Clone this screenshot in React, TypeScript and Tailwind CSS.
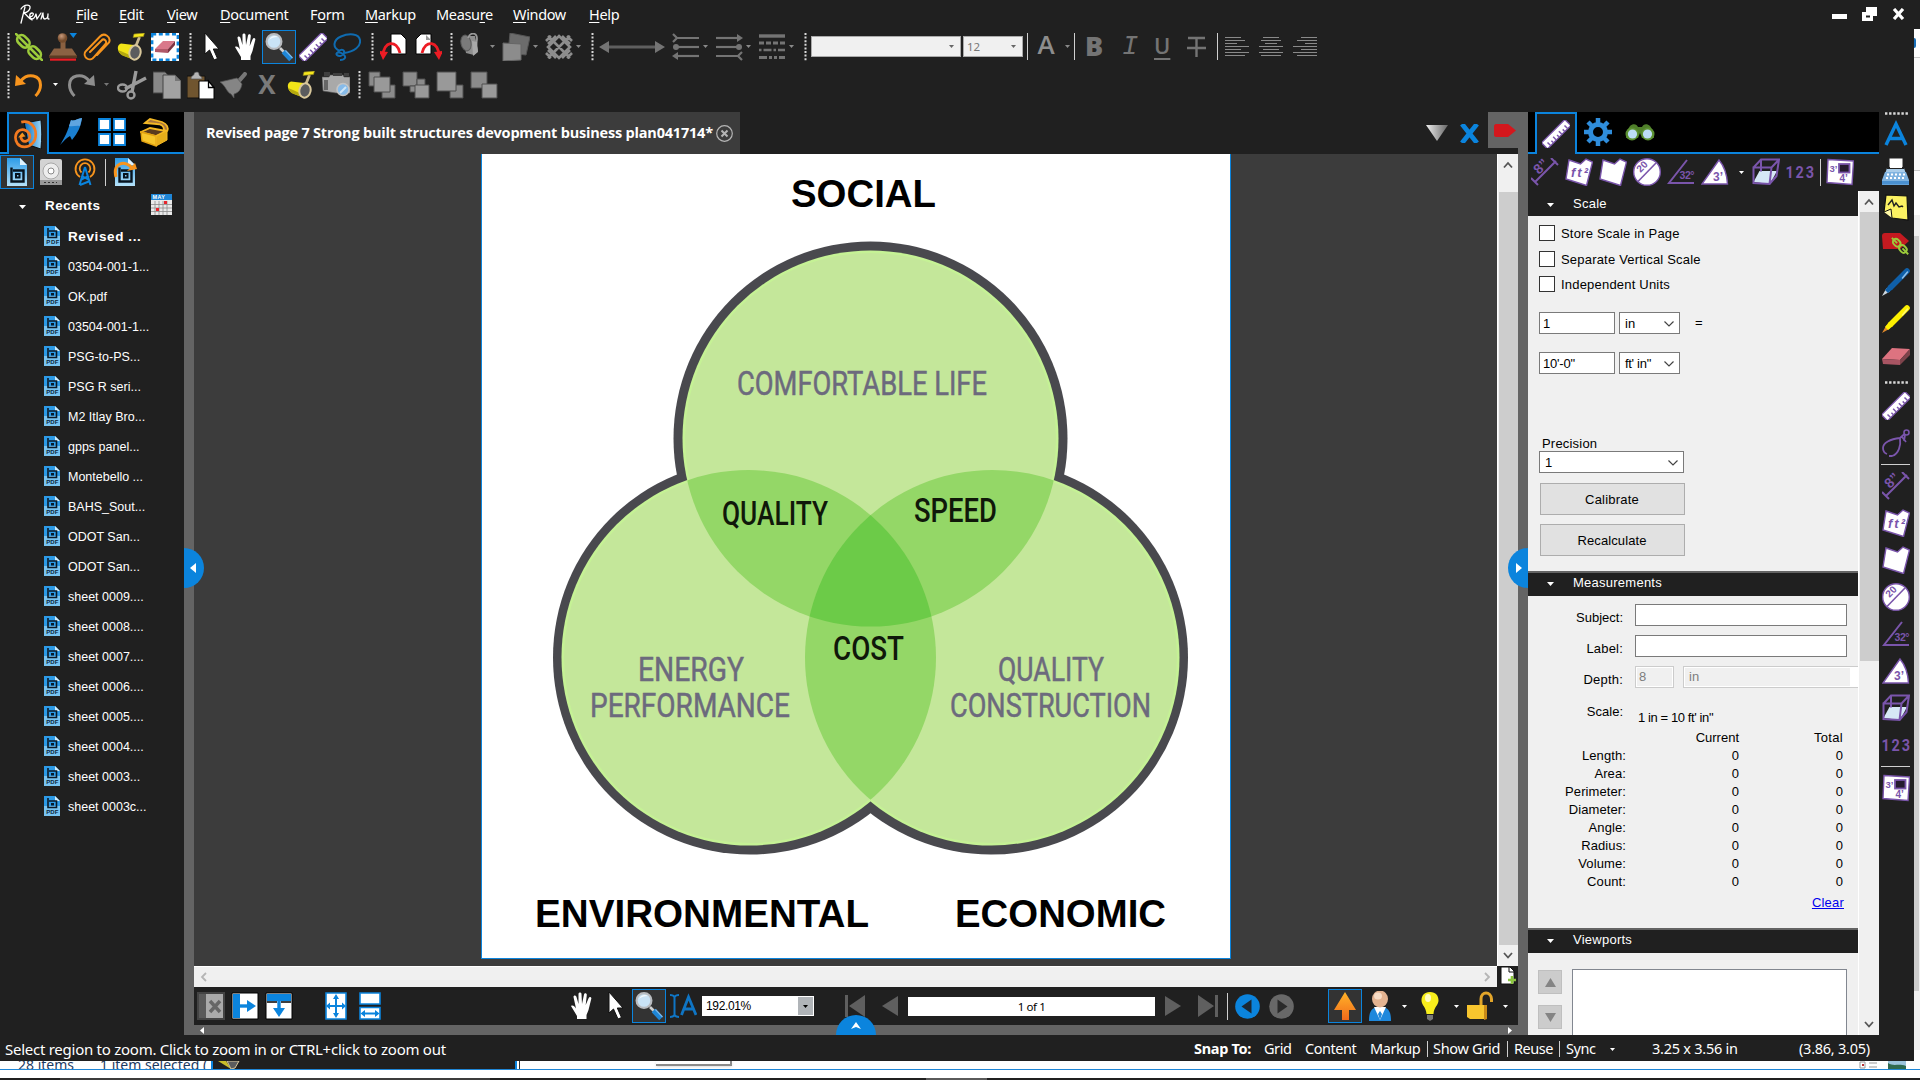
import React from "react";

type Kids = { children?: React.ReactNode };
type Cls = { c?: string };

const P = "#7a55ab";

function Slot({ c = "", children }: Cls & Kids) {
  return <div className={`flex shrink-0 items-center justify-center ${c}`}>{children}</div>;
}

function Ico({ s = 28, w, vb = "0 0 28 28", children }: Kids & { s?: number; w?: number; vb?: string }) {
  return (
    <svg width={w ?? s} height={s} viewBox={vb} fill="none" className="shrink-0">
      {children}
    </svg>
  );
}

const Grip = ({ c = "" }: Cls) => (
  <svg width="3" height="29" viewBox="0 0 3 29" className={`shrink-0 ${c}`}>
    <path d="M1.5 1v28" stroke="#d9d9d9" strokeWidth="2" strokeDasharray="2 1.6" />
  </svg>
);
const GripH = () => (
  <svg width="24" height="3" viewBox="0 0 24 3">
    <path d="M1 1.500h23" stroke="#d9d9d9" strokeWidth="2.400" strokeDasharray="2.400 1.700" />
  </svg>
);
const Caret = ({ c = "text-white" }: Cls) => (
  <svg width="5" height="3" viewBox="0 0 5 3" className={`shrink-0 ${c}`}>
    <path d="M0 0h5L2.500 3z" fill="currentColor" />
  </svg>
);
const Sep = ({ c = "" }: Cls) => <div className={`h-[27px] w-px shrink-0 bg-[#cfcfcf] ${c}`} />;

/* ---------- general icons ---------- */
const LinkIcon = () => (
  <Ico>
    <g transform="rotate(45 14 14)" stroke="#9ccb3b" strokeWidth="2.600">
      <rect x="-1" y="9.500" width="14" height="9" rx="4.500" />
      <rect x="15" y="9.500" width="14" height="9" rx="4.500" />
      <path d="M-4.500 14H8M20 14h12.500M9 14h10" strokeLinecap="round" />
    </g>
  </Ico>
);
const StampIcon = () => (
  <Ico>
    <defs>
      <radialGradient id="stampKnob" cx=".4" cy=".3"><stop stopColor="#c99a7c" /><stop offset="1" stopColor="#754c2c" /></radialGradient>
    </defs>
    <rect x="11.500" y="7" width="5" height="11" fill="#8a6040" />
    <circle cx="13.500" cy="5" r="4.800" fill="url(#stampKnob)" />
    <path d="M5 15.500h18L28 23H0z" fill="#8b6243" />
    <path d="M0 22.500h28v2.500H0z" fill="#5b3b22" />
    <path d="M1 26.600h26" stroke="#ed1c24" strokeWidth="2.200" />
    <path d="M20.500 0H28l-3.700 5z" fill="#0b84dd" />
  </Ico>
);
const ClipIcon = () => (
  <Ico>
    <path d="M7 19 18.500 7.500a2.500 2.500 0 0 1 4 3.500L11 24a5 5 0 0 1-8.500-5.500L17 3.500a5.500 5.500 0 0 1 9 6L14 22" stroke="#f7941d" strokeWidth="2" strokeLinecap="round" />
  </Ico>
);
const BucketIcon = () => (
  <Ico>
    <path d="m18.500 14 4-10" stroke="#cbb98f" strokeWidth="2.800" />
    <path d="m17 1 10.500-1-1 3.500-10.500 1z" fill="#f5e61c" stroke="#8a7e1c" strokeWidth=".6" />
    <path d="M4 10.500 17 12l1 15-12-4.500C0 20-1 12 4 10.500z" fill="#f2e418" />
    <path d="M1 17c1 3 3 5 5 5.800L17 27v-3L6 19z" fill="#b5a90e" />
    <ellipse cx="18" cy="19.500" rx="5.600" ry="7.200" transform="rotate(12 18 19.500)" fill="#5b5c5e" stroke="#d9c89c" strokeWidth="2" />
  </Ico>
);
const EraseSelIcon = () => (
  <Ico>
    <path d="M0 0h28v28H0z" fill="#fff" />
    <rect x="1.200" y="1.200" width="25.600" height="25.600" stroke="#0b84dd" strokeWidth="2.400" strokeDasharray="4 2.600" />
    <path d="m12 8 12 0-7 8-13 0z" fill="#d9788a" />
    <path d="M4 16h13v4L4 19z" fill="#b05868" />
    <path d="m24 8-7 8v4l7-8z" fill="#7d3140" />
  </Ico>
);
const Eraser = () => (
  <Ico w={28} s={20} vb="0 0 28 20">
    <path d="M10 2 28 3 18 14 0 13z" fill="#dd7380" />
    <path d="m0 13 18 1v5L1 18z" fill="#a85563" />
    <path d="M28 3 18 14v5L28 9z" fill="#7e434b" />
  </Ico>
);
const ArrowCursor = () => (
  <Ico>
    <path d="m8 0 0 21 4.500-4L17 27l3.500-1.500L16.300 16H22z" fill="#fff" stroke="#111" />
  </Ico>
);
const Hand = () => (
  <Ico>
    <path d="M4 14c2-1.500 4 1 5 2.500L6.500 5c0-2 2.300-2 3 0l2 7V2c0-2 3-2 3 0l.5 10L17 2.500c.5-2 3-1.500 2.800.5L18.700 13l3-7c.8-1.800 3-1 2.600.8L21.500 18l-2 5v4H10v-3z" fill="#fff" />
  </Ico>
);
const Magnifier = () => (
  <Ico s={30} vb="0 0 30 30">
    <path d="m16 16 4 4" stroke="#cfcfcf" strokeWidth="2.600" />
    <path d="m19.500 19.500 7.500 8" stroke="#1f86d6" strokeWidth="5" />
    <path d="m21.500 18.500 7 7.500" stroke="#7ab9ec" strokeWidth="1.200" />
    <circle cx="10" cy="9.500" r="7.400" fill="#c9e3f6" stroke="#b9bcc0" strokeWidth="2.200" />
    <path d="M5 8a6 6 0 0 1 9-3C10 5 7 6 5 8z" fill="#fff" opacity=".8" />
  </Ico>
);
const Ruler = () => (
  <Ico>
    <g transform="rotate(-45 14 14)">
      <rect x="-2.500" y="10" width="33" height="8.500" fill="#fff" stroke={P} strokeWidth="1.300" />
      <path d="M2 14v4M6 15.500V18M10 14v4M14 15.500V18M18 14v4M22 15.500V18M26 14v4" stroke={P} strokeWidth="1.500" />
    </g>
  </Ico>
);
const Lasso = () => (
  <Ico>
    <path d="M7 18C-1 15 0 7 8 3.500s18-3 19 3.500-6 12-16 13M5 19c3-4 7-2 6 1s-5 4-7 2 2-4 6-1 2 6-3 6" stroke="#0f6bb0" strokeWidth="2" />
  </Ico>
);
const Rotate = ({ flip }: { flip?: boolean }) => (
  <Ico>
    <g transform={flip ? "matrix(-1 0 0 1 28 0)" : undefined}>
      <path d="M11 1h10l5 5v15H11z" fill="#fff" stroke="#000" />
      <path d="M3 23C3 8 17 6 20 20" stroke="#ed1c24" strokeWidth="2.800" />
      <path d="m-1 18 9 1-5 8z" fill="#ed1c24" />
    </g>
    {flip && <path d="m12 2 5 5h-5z" fill="#999" />}
  </Ico>
);
const Cup = () => (
  <Ico>
    <path d="M4 3h12l3 15-4 4-8-2z" fill="#8f8f8f" />
    <ellipse cx="7" cy="10" rx="5" ry="8" transform="rotate(-12 7 10)" fill="#7a7a7a" stroke="#5a5a5a" />
    <path d="M9 5c2-6 9-6 9 1l-1 8" stroke="#9a9a9a" strokeWidth="1.800" />
    <path d="m13 8 5 1 1 10-5 4z" fill="#a8a8a8" />
  </Ico>
);
const TwoSq = () => (
  <Ico>
    <path d="m8 0 20 4-4 18-18-2z" fill="#6c6c6c" stroke="#555" />
    <path d="m1 10 18 1v16L1 28z" fill="#8c8c8c" stroke="#666" />
  </Ico>
);
const Hatch = () => (
  <Ico>
    <path d="m3 3 22 22M3 25 25 3M3 11l8-8M17 3l8 8M3 17l8 8M25 17l-8 8M1 8l5-5M22 3l5 5M1 20l5 5M27 20l-5 5" stroke="#8d8d8d" strokeWidth="2.600" />
    <path d="m14 3 11 11-11 11L3 14z" stroke="#8d8d8d" strokeWidth="2.600" />
  </Ico>
);
const DoubleArrow = () => (
  <Ico w={66} s={14} vb="0 0 66 14">
    <path d="M8 7h50" stroke="#5f5f5f" strokeWidth="3" />
    <path d="M0 7 10 1v12zM66 7 56 1v12z" fill="#747474" />
  </Ico>
);
const LineStarts = ({ flip }: { flip?: boolean }) => (
  <Ico>
    <g transform={flip ? "rotate(180 14 14)" : undefined} stroke="#747474" fill="#747474" strokeWidth="2.200">
      <path d="M5 5h22M1 1l4 4-4 4" fill="none" />
      <path d="M5 14h22" />
      <circle cx="4" cy="14" r="3" stroke="none" />
      <path d="M5 23h22" />
      <path d="m0 23 6-4v8z" stroke="none" />
    </g>
  </Ico>
);
const Dashes = () => (
  <Ico>
    <path d="M1 3h26" stroke="#747474" strokeWidth="3.400" />
    <path d="M1 10h26" stroke="#747474" strokeWidth="3" strokeDasharray="5 2" />
    <path d="M1 17h26" stroke="#747474" strokeWidth="2.600" strokeDasharray="2.500 2 8 2" />
    <path d="M1 24.500h26" stroke="#747474" strokeWidth="3" strokeDasharray="8 2 3 2 3 2" />
  </Ico>
);
const Align = ({ k }: { k: "l" | "c" | "r" }) => (
  <div className={`flex w-6 flex-col gap-[2px] ${k === "l" ? "items-start" : k === "c" ? "items-center" : "items-end"}`}>
    <div className="h-px w-4 bg-[#8a8a8a]" />
    <div className="h-px w-5 bg-[#8a8a8a]" />
    <div className="h-px w-3 bg-[#8a8a8a]" />
    <div className="h-px w-6 bg-[#8a8a8a]" />
    <div className="h-px w-4 bg-[#8a8a8a]" />
    <div className="h-px w-6 bg-[#8a8a8a]" />
    <div className="h-px w-5 bg-[#8a8a8a]" />
  </div>
);
const Undo = ({ flip, color }: { flip?: boolean; color: string }) => (
  <Ico>
    <g transform={flip ? "matrix(-1 0 0 1 28 0)" : undefined}>
      <path d="M6 9.500C13 1.500 25.500 4 25.500 14c0 5-2 8-5 11" stroke={color} strokeWidth="3" />
      <path d="M1 4 0 15l11-2z" fill={color} />
    </g>
  </Ico>
);
const Scissors = () => (
  <Ico s={30} vb="0 0 30 30">
    <path d="M19 1 15 22M29 8 8 19" stroke="#9a9a9a" strokeWidth="3.400" />
    <circle cx="14" cy="25" r="3.500" stroke="#9a9a9a" strokeWidth="2.400" />
    <ellipse cx="5.500" cy="18" rx="4.500" ry="3.500" stroke="#9a9a9a" strokeWidth="2.400" />
  </Ico>
);
const Copy = () => (
  <Ico>
    <path d="M0 1h12l3 3v18H0z" fill="#888" stroke="#444" />
    <path d="M10 4h12l6 6v18H10z" fill="#a2a2a2" stroke="#444" />
    <path d="M22 4v6h6z" fill="#777" />
  </Ico>
);
const Paste = () => (
  <Ico>
    <path d="M0 5h18v22H0z" fill="#70552f" stroke="#111" />
    <path d="M4 8c0-4 3-3 3-5s5-3 5 0 3 1 3 5z" fill="#b5b5b5" stroke="#555" strokeWidth=".7" />
    <path d="M12 10h10l5 6v12H12z" fill="#fff" stroke="#000" />
    <path d="M21.500 10v6.500H27z" fill="#fff" stroke="#000" strokeWidth="1.300" />
  </Ico>
);
const Brush = () => (
  <Ico>
    <path d="m17 9 7-8c3 0 4 2 2 4l-6 7z" fill="#777" />
    <path d="m0 11 17-4 5 6c-1 6-4 9-8 10v4l-3-4C7 22 6 15 0 11z" fill="#858585" stroke="#555" strokeWidth=".7" />
  </Ico>
);
const Camera = () => (
  <Ico>
    <path d="M0 6h7l1-2h13l1 2h6v16H14L1 20z" fill="#a9a9a9" stroke="#555" strokeWidth=".6" />
    <path d="M2 1h6v4H2zM11 2h9v3h-9zM22 2h5v3h-5z" fill="#3f3f3f" />
    <path d="M2 9h4v10H2z" fill="#666" />
    <circle cx="21" cy="18.500" r="6" fill="#86bbea" stroke="#c4c4c4" strokeWidth="1.600" />
    <path d="m18 22 6-6" stroke="#cfe6f8" strokeWidth="2" />
  </Ico>
);
const Sq = ({ k }: { k: number }) => (
  <Ico>
    <g stroke="#4f4f4f" fill="#8b8b8b">
      {k === 0 && <><path d="M1 1h11v14H1z" /><path d="M14 14h13v13H14z" /><path d="M6 6h16v15H6z" fill="#999" /></>}
      {k === 1 && <><path d="M1 1h14v14H1z" /><path d="M15 8h8v8h-8zM8 15h6v6H8z" /><path d="M13 14h14v13H13z" fill="#999" /></>}
      {k === 2 && <><path d="M14 14h13v13H14z" /><path d="M1 1h19v19H1z" fill="#999" /></>}
      {k === 3 && <><path d="M1 1h16v16H1z" /><path d="M12 13h15v14H12z" fill="#999" /></>}
    </g>
  </Ico>
);

/* ---------- measuring icons ---------- */
const MLen = () => (
  <Ico>
    <path d="M4 24 25 3M0 20l7 7M20 0l7 7" stroke={P} strokeWidth="2" />
    <text x="0" y="0" transform="translate(8 17) rotate(-45)" fill={P} fontSize="14" fontFamily="Liberation Sans" fontWeight="700">8”</text>
  </Ico>
);
const MPoly = ({ t }: { t?: string }) => (
  <Ico>
    <path d="m4 2 11.500 4L21 1l6.500 3-6 23.500L1 21z" fill="#fff" stroke={P} strokeWidth="1.400" />
    {t && <text x="6" y="18.500" fill={P} fontSize="13" fontFamily="Liberation Sans" fontWeight="700" fontStyle="italic" textLength="17">{t}</text>}
  </Ico>
);
const MCircle = () => (
  <Ico>
    <circle cx="14" cy="14" r="13.300" fill="#fff" stroke={P} strokeWidth="1.400" />
    <path d="M5 23.500 23 5" stroke={P} strokeWidth="1.600" />
    <text transform="translate(7.500 15) rotate(-45)" fill={P} fontSize="10" fontFamily="Liberation Sans" fontWeight="700">20</text>
  </Ico>
);
const MAngle = () => (
  <Ico>
    <path d="M20 2 2 25h25" stroke={P} strokeWidth="2" />
    <text x="12.500" y="20.500" fill={P} fontSize="10.500" fontFamily="Liberation Sans" fontWeight="700" textLength="15">32°</text>
  </Ico>
);
const MTri = () => (
  <Ico>
    <path d="M18 2c5 6 8 14 8.500 24H1z" fill="#fff" stroke={P} strokeWidth="1.400" />
    <text x="12" y="22.500" fill={P} fontSize="12" fontFamily="Liberation Sans" fontWeight="700">3’</text>
  </Ico>
);
const MCube = () => (
  <Ico>
    <path d="m1.500 24 6-11H25l-7 13z" fill="#d6e8f6" />
    <path d="M1.500 9.500h18L17.500 26 1.500 25zM1.500 9.500 9 1.500h18l-7.500 8M27 1.500 24.500 18l-7 8M9 1.500v12" stroke={P} strokeWidth="2" />
  </Ico>
);
const MCount = () => (
  <Ico w={30} vb="0 0 30 28">
    <g fill={P} fontSize="17" fontFamily="Roboto" fontWeight="700">
      <text x="0.500" y="20" transform="scale(.85 1)">1</text>
      <text x="12.500" y="20" transform="scale(.85 1)">2</text>
      <text x="24.500" y="20" transform="scale(.85 1)">3</text>
    </g>
  </Ico>
);
const MView = () => (
  <Ico>
    <path d="m2 1.500 25.500 1.500-1.500 23.500L1 24.500z" fill="#fff" stroke={P} strokeWidth="1.400" />
    <rect x="13" y="6" width="10.500" height="8.500" fill="#241a2e" stroke={P} strokeWidth="1.800" />
    <text x="3.500" y="13.500" fill={P} fontSize="9.500" fontFamily="Liberation Sans" fontWeight="700">3’</text>
    <text x="13.500" y="24" fill={P} fontSize="10" fontFamily="Liberation Sans" fontWeight="700">4’</text>
  </Ico>
);
const Compass = () => (
  <Ico>
    <circle cx="24.500" cy="3.500" r="2.500" stroke={P} strokeWidth="1.600" />
    <path d="M22.500 5 18 9C8 10 1 14 1 19c0 3 1 5 4 6M18 9c1 7-1 16-8 18H7M20 8l4 5M23 6l-1 6" stroke={P} strokeWidth="1.800" />
  </Ico>
);

/* ---------- side icons ---------- */
const Typewriter = () => (
  <Ico w={27} vb="0 0 27 28">
    <path d="M7 1h14v13H7z" fill="#fff" stroke="#222" />
    <path d="M5 11h17l3 9H2z" fill="#a9cdea" />
    <path d="M3 15h21l3 8v5H0v-5z" fill="#7fb3e0" />
    <path d="M5 17.500h18M4 21h20" stroke="#fff" strokeWidth="1.800" strokeDasharray="2 2" />
    <path d="M0 24h27v3.500H0z" fill="#4a90d0" />
    <path d="M5 11h17" stroke="#222" strokeWidth="2" />
    <path d="M8 2h12v9H8z" fill="#fff" />
  </Ico>
);
const Note = () => (
  <Ico>
    <path d="m4 1 21 1 1 24-16-2-8-6z" fill="#fcf262" stroke="#111" strokeWidth="1.200" />
    <path d="m2 18 7-3 1 9" fill="#fff9a8" stroke="#111" />
    <path d="m6 11 4-5 2 6 2-3 3 4 3-1 1 1" stroke="#222" strokeWidth="1.400" />
  </Ico>
);
const TagLink = () => (
  <Ico>
    <path d="M0 5c0-2 1-3 3-3h15l9 8-9 8H1z" fill="#c41a20" />
    <g transform="translate(9 6) scale(.68)" stroke="#9ccb3b" strokeWidth="2.800">
      <g transform="rotate(45 14 14)">
        <rect x="0" y="9.500" width="12" height="9" rx="4.500" />
        <rect x="13" y="9.500" width="12" height="9" rx="4.500" />
        <path d="M-4 14h11M18 14h12" />
      </g>
    </g>
  </Ico>
);
const Pen = ({ c, tip, hi }: { c: string; tip: string; hi: string }) => (
  <Ico>
    <path d="M25 3 9 19" stroke={c} strokeWidth="5.600" strokeLinecap="round" />
    <path d="M4.500 20 0 28l8-4.500z" fill={tip} />
    <path d="m25.500 4-5 6" stroke={hi} strokeWidth="1.600" strokeLinecap="round" />
    <path d="m7 17 4 4-5 4-3-3z" fill={c} />
  </Ico>
);
const Swirl = () => (
  <Ico s={29}>
    <defs><linearGradient id="book"><stop stopColor="#0a6fc0" /><stop offset="1" stopColor="#9fd8f8" /></linearGradient></defs>
    <path d="M10 3 26 0c1 9 1 18 0 28l-12-4z" fill="url(#book)" stroke="#000" strokeWidth=".8" />
    <path d="M7 2c9-2 14 5 14 12S16 26 10 26 1 21 1.500 16 6 8.500 10 9.500s6 5 5 8-5 4-7 2-1-4 0-5" stroke="#f37a20" strokeWidth="2.600" />
    <path d="m4 17 4-5 3 4z" fill="#f7941d" />
  </Ico>
);
const Bookmark = () => (
  <Ico>
    <path d="M15 2c3 2 7-2 11-2-1 8-4 15-10 22l-2-4c-4 2-6 5-10 9 4-6 8-14 11-25z" fill="#1b7fd0" />
    <path d="M15 2c3 2 7-2 11-2l-2 8c-4-1-7 1-11 0z" fill="#5fa5e0" />
  </Ico>
);
const Grid4 = () => (
  <Ico>
    <path d="M1 1h11v11H1zM16 1h11v11H16zM1 16h11v11H1zM16 16h11v11H16z" fill="#fff" stroke="#0b84dd" strokeWidth="1.800" />
  </Ico>
);
const Chest = () => (
  <Ico w={30} s={29} vb="0 0 30 29">
    <path d="m5 5 5-4 12 3c5 2 7 6 5 9l-3-1C24 8 21 6 17 6z" fill="#a9743f" stroke="#f4b824" strokeWidth="1.800" />
    <path d="m1 14 9-4 16 3-10 5z" fill="#5b3a1e" stroke="#f4b824" strokeWidth="1.800" />
    <path d="m1 14 15 4v10L2 23z" fill="#f7c62c" stroke="#e0a010" strokeWidth="1.400" />
    <path d="m16 18 11-5v9l-11 6z" fill="#e6ad1a" stroke="#f4b824" />
  </Ico>
);
const FileB = ({ arrow }: { arrow?: boolean }) => (
  <Ico w={24} s={28} vb="0 0 24 28">
    <defs><linearGradient id="fileB" x1="0" y1="0" x2="0" y2="1"><stop stopColor="#2c9be8" /><stop offset="1" stopColor="#b5e2fa" /></linearGradient></defs>
    <path d="M2 0h13l7 7v21H2z" fill="url(#fileB)" />
    <path d="M15 0v7h7z" fill="#dff2fd" />
    <path d="M6.500 9.500v14H18.500V12.500H8" stroke="#06131f" strokeWidth="2.400" />
    <rect x="11" y="16" width="3.500" height="3.500" stroke="#06131f" strokeWidth="2" />
    {arrow && <><path d="M3 19C-1 4 13 2 19 10" stroke="#f7941d" strokeWidth="3" /><path d="m14 13 10-2-2-6z" fill="#f7941d" /></>}
  </Ico>
);
const Drive = () => (
  <Ico w={22} s={28} vb="0 0 22 28">
    <rect x="0" y="1" width="22" height="23" rx="2" fill="#d3d3d3" />
    <circle cx="11" cy="13" r="8" fill="#ededed" stroke="#999" strokeWidth=".8" />
    <circle cx="11" cy="13" r="3" fill="#fff" stroke="#888" />
    <path d="M0 22h22v5H0z" fill="#999" />
    <path d="M4 24.500h13" stroke="#333" strokeDasharray="2 2" />
  </Ico>
);
const Antenna = () => (
  <Ico w={24} s={28} vb="0 0 24 28">
    <path d="M7 19a9.500 9.500 0 1 1 10 0M8.500 14.500a5.300 5.300 0 1 1 7 0" stroke="#f7941d" strokeWidth="1.800" />
    <path d="M12 9 6.500 27M12 9l5.500 18M9 18l7 4M15 18l-7 4M7 27l10-4" stroke="#0b84dd" strokeWidth="2" />
  </Ico>
);
const Calendar = () => (
  <Ico s={21} vb="0 0 21 21">
    <path d="M0 0h21v21H0z" fill="#e9e9e9" />
    <path d="M0 0h21v6H0z" fill="#1f86d6" />
    <path d="M0 10.500h21M0 14h21M0 17.500h21M4 7v14M8 7v14M12 7v14M16 7v14" stroke="#8a8a8a" strokeWidth=".8" />
    <path d="M13 7h3v3h-3zM5 14h3v3H5z" fill="#e8242c" />
    <text x="1.500" y="5.300" fontSize="5.500" fill="#fff" fontWeight="700" fontFamily="Liberation Sans">MAY</text>
  </Ico>
);
const PdfFile = () => (
  <svg width="16" height="20" viewBox="0 0 16 20" fill="none" className="shrink-0">
    <path d="M0 0h11l5 5v15H0z" fill="#2d9ae6" />
    <path d="M0 10h16v10H0z" fill="#78c3f0" />
    <path d="M11 0v5h5z" fill="#d4edfb" />
    <path d="M4 2v9.500h8.500V5H5" stroke="#0a1a28" strokeWidth="1.600" />
    <path d="M7 7h3v2.500H7z" fill="#0a1a28" />
    <text x="2.300" y="18" fontSize="6" fontWeight="700" fill="#0a2338" fontFamily="Liberation Sans">PDF</text>
  </svg>
);
const Gear = () => (
  <Ico>
    <circle cx="14" cy="14" r="7.500" stroke="#2f8ddb" strokeWidth="5" />
    <path d="M14 0v6M14 22v6M0 14h6M22 14h6M4 4l4.500 4.500M19.500 19.500 24 24M4 24l4.500-4.500M19.500 8.500 24 4" stroke="#2f8ddb" strokeWidth="4.500" />
  </Ico>
);
const Binoculars = () => (
  <Ico w={30} s={18} vb="0 0 30 18">
    <path d="M5 3c3-3 7-2 8 1h4c1-3 5-4 8-1l4 6v6H17l-2-5-2 5H1V9z" fill="#4f7f2a" />
    <circle cx="7" cy="11" r="6.500" fill="#5c9132" />
    <circle cx="23" cy="11" r="6.500" fill="#5c9132" />
    <circle cx="7.500" cy="11" r="4.600" fill="#bcdcf5" />
    <circle cx="22.500" cy="11" r="4.600" fill="#bcdcf5" />
  </Ico>
);

const Chevron = ({ d, c = "#555", w = 10 }: { d: "u" | "d" | "l" | "r"; c?: string; w?: number }) => (
  <svg width={w} height={w} viewBox="0 0 10 10" fill="none">
    <path d={{ u: "M1 7.500 5 3l4 4.500", d: "M1 3l4 4.500L9 3", l: "M7 1 3 5l4 4", r: "M3 1l4 4-4 4" }[d]} stroke={c} strokeWidth="1.800" />
  </svg>
);

/* ---------- regions ---------- */
const menu: [string, string, string, string][] = [
  ["", "F", "ile", "w-[43px]"],
  ["", "E", "dit", "w-[48px]"],
  ["", "V", "iew", "w-[53px]"],
  ["", "D", "ocument", "w-[90px]"],
  ["F", "o", "rm", "w-[55px]"],
  ["", "M", "arkup", "w-[71px]"],
  ["Measu", "r", "e", "w-[77px]"],
  ["", "W", "indow", "w-[76px]"],
  ["", "H", "elp", "w-[60px]"],
];

function MenuBar() {
  return (
    <div className="flex h-[28px] items-center">
      <div className="w-[76px] pl-[19px]">
        <svg width="32" height="20" viewBox="0 0 32 20" fill="none" stroke="#fff" strokeWidth="1.300" strokeLinecap="round" strokeLinejoin="round">
          <path d="M2 5C5 0 12 0 11 4 10 8 5 9 5 9c3 2 5 6 8 7M6 3 2 19M11 13c4-1 4-4 2-4-3 0-3 6 0 6 2 0 3-2 4-5l1 5 4-6M22 15c1-2 1-5 2-6 0 4 0 6 2 6s3-3 3-5c0 3-1 5 1 5" />
        </svg>
      </div>
      {menu.map(([a, u, b, w]) => (
        <div key={u + b} className={`${w} font-['Noto_Sans'] text-[14.500px] leading-5 tracking-[-0.35px] text-white`}>
          {a}
          <span className="underline underline-offset-2">{u}</span>
          {b}
        </div>
      ))}
      <div className="ml-auto flex items-center gap-[15px] pr-[9px]">
        <div className="mt-[5px] h-[5px] w-[15px] bg-white" />
        <svg width="15" height="14" viewBox="0 0 15 14"><path d="M4 0h11v9H4z" fill="#fff" /><path d="M0 5h11v9H0z" fill="#fff" /><path d="M4 8.500h4v2H4z" fill="#202020" /></svg>
        <svg width="13" height="12" viewBox="0 0 13 12"><path d="m2 1 9 10M11 1 2 11" stroke="#fff" strokeWidth="3.200" /></svg>
      </div>
    </div>
  );
}

function ToolbarTop() {
  const dim = "text-[#8a8a8a]";
  return (
    <div className="flex h-[37px] items-center">
      <Grip c="ml-[7px]" />
      <Slot c="ml-[2px] w-[34px]"><LinkIcon /></Slot>
      <Slot c="w-[34px]"><StampIcon /></Slot>
      <Slot c="w-[34px]"><ClipIcon /></Slot>
      <Slot c="w-[34px]"><BucketIcon /></Slot>
      <Slot c="w-[34px]"><EraseSelIcon /></Slot>
      <Grip c="ml-[7px]" />
      <Slot c="ml-[2px] w-[34px]"><ArrowCursor /></Slot>
      <Slot c="w-[34px]"><Hand /></Slot>
      <Slot c="h-[34px] w-[34px] border border-[#0b84dd] bg-[#333]"><Magnifier /></Slot>
      <Slot c="w-[34px]"><Ruler /></Slot>
      <Slot c="w-[34px]"><Lasso /></Slot>
      <Grip c="ml-[7px]" />
      <Slot c="ml-[3px] w-[34px]"><Rotate /></Slot>
      <Slot c="w-[34px]"><Rotate flip /></Slot>
      <Grip c="ml-[5px]" />
      <Slot c="ml-[3px] w-[34px]"><Cup /></Slot>
      <Caret c={dim} />
      <Slot c="ml-[4px] w-[34px]"><TwoSq /></Slot>
      <Caret c={dim} />
      <Slot c="ml-[4px] w-[34px]"><Hatch /></Slot>
      <Caret c={dim} />
      <Grip c="ml-[10px]" />
      <Slot c="ml-[5px] w-[66px]"><DoubleArrow /></Slot>
      <Slot c="ml-[4px] w-[34px]"><LineStarts /></Slot>
      <Caret c={dim} />
      <Slot c="ml-[4px] w-[34px]"><LineStarts flip /></Slot>
      <Caret c={dim} />
      <Slot c="ml-[4px] w-[34px]"><Dashes /></Slot>
      <Caret c={dim} />
      <Grip c="ml-[10px]" />
      <div className="ml-[4px] flex h-[21px] w-[150px] items-center justify-end border border-[#aaa] bg-[#f0f0f0] pr-[6px]"><Caret c="text-[#666]" /></div>
      <div className="ml-[2px] flex h-[21px] w-[60px] items-center justify-between border border-[#aaa] bg-[#f0f0f0] pr-[6px] pl-[3px] font-['Noto_Sans'] text-[11.500px] text-[#777]">12<Caret c="text-[#666]" /></div>
      <Sep c="ml-[4px]" />
      <div className="ml-[7px] flex w-[22px] justify-center pb-[5px] font-['Open_Sans'] text-[26px] leading-8 font-semibold text-[#8d8d8d]">A</div>
      <Slot c="w-[16px] pl-1"><Caret c={dim} /></Slot>
      <Sep c="ml-[1px]" />
      <div className="ml-[10px] w-[34px] pb-px font-['Open_Sans'] text-[27px] leading-8 font-extrabold text-[#747474]">B</div>
      <div className="w-[34px] pl-[3px] font-['Liberation_Mono'] text-[27px] leading-8 text-[#747474] italic">I</div>
      <div className="ml-[1px] w-[33px] pb-[3px] font-['Open_Sans'] text-[22px] leading-8 font-semibold text-[#747474] underline decoration-2 underline-offset-4">U</div>
      <div className="w-[30px]"><Ico w={19} s={22} vb="0 0 19 22"><path d="M1 2h17M9.500 2v19M0 12h19" stroke="#747474" strokeWidth="2.400" /></Ico></div>
      <Sep />
      <div className="ml-[7px] flex gap-[10px]"><Align k="l" /><Align k="c" /><Align k="r" /></div>
    </div>
  );
}

function ToolbarSecond() {
  return (
    <div className="flex h-[39px] items-center">
      <Grip c="ml-[7px]" />
      <Slot c="ml-[2px] w-[34px]"><Undo color="#f7941d" /></Slot>
      <Slot c="w-[19px]"><Caret /></Slot>
      <Slot c="w-[32px]"><Undo flip color="#8d8d8d" /></Slot>
      <Slot c="w-[18px]"><Caret c="text-[#777]" /></Slot>
      <Slot c="w-[34px]"><Scissors /></Slot>
      <Slot c="w-[34px] pl-px"><Copy /></Slot>
      <Slot c="w-[34px] pl-px"><Paste /></Slot>
      <Slot c="w-[33px]"><Brush /></Slot>
      <Slot c="w-[34px] font-['Open_Sans'] text-[26px] font-bold text-[#7a7a7a]">X</Slot>
      <Slot c="w-[34px]"><BucketIcon /></Slot>
      <Slot c="w-[35px]"><Camera /></Slot>
      <Grip c="ml-[5px]" />
      <Slot c="ml-[4px] w-[34px]"><Sq k={0} /></Slot>
      <Slot c="w-[34px]"><Sq k={1} /></Slot>
      <Slot c="w-[34px]"><Sq k={2} /></Slot>
      <Slot c="w-[34px]"><Sq k={3} /></Slot>
    </div>
  );
}

const recents = [
  "03504-001-1...", "OK.pdf", "03504-001-1...", "PSG-to-PS...", "PSG R seri...", "M2 Itlay Bro...", "gpps panel...",
  "Montebello ...", "BAHS_Sout...", "ODOT San...", "ODOT San...", "sheet 0009....", "sheet 0008....", "sheet 0007....",
  "sheet 0006....", "sheet 0005....", "sheet 0004....", "sheet 0003...", "sheet 0003c...",
];

function LeftPanel() {
  return (
    <div className="flex w-[184px] shrink-0 flex-col bg-[#202020]">
      <div className="flex h-[42px] bg-black">
        <div className="w-[7px] border-b-2 border-[#0b84dd]" />
        <Slot c="w-[42px] border-x-2 border-t-2 border-[#0b84dd] bg-[#202020]"><Swirl /></Slot>
        <Slot c="w-[42px] border-b-2 border-[#0b84dd]"><Bookmark /></Slot>
        <Slot c="w-[42px] border-b-2 border-[#0b84dd]"><Grid4 /></Slot>
        <Slot c="w-[43px] border-b-2 border-[#0b84dd]"><Chest /></Slot>
        <div className="flex-1 border-b-2 border-[#0b84dd]" />
      </div>
      <div className="flex h-[36px] items-center">
        <Slot c="h-[34px] w-[34px] border border-[#0b84dd] bg-[#333]"><FileB /></Slot>
        <Slot c="w-[34px]"><Drive /></Slot>
        <Slot c="w-[34px]"><Antenna /></Slot>
        <Sep c="ml-[3px]" />
        <Slot c="ml-[2px] w-[34px]"><FileB arrow /></Slot>
      </div>
      <div className="flex h-[31px] items-center pt-px pl-[19px] font-['Liberation_Sans'] text-[13.500px] font-bold tracking-[.4px] text-white">
        <svg width="7" height="4" viewBox="0 0 7 4" className="mt-[2px]"><path d="M0 0h7L3.500 4z" fill="#fff" /></svg>
        <span className="ml-[19px]">Recents</span>
        <div className="ml-auto pr-[12px] pb-[3px]"><Calendar /></div>
      </div>
      <div className="flex h-[30px] items-center gap-2 pl-[44px] font-['Liberation_Sans'] text-[13.500px] font-bold tracking-[.6px] text-white"><PdfFile /><span className="pt-[2px]">Revised ...</span></div>
      {recents.map((r, i) => (
        <div key={i} className="flex h-[30px] items-center gap-2 pl-[44px] font-['Liberation_Sans'] text-[12.500px] text-white"><PdfFile /><span className="pt-[2px]">{r}</span></div>
      ))}
    </div>
  );
}

function Venn() {
  const tx = { fontFamily: "Roboto, sans-serif", lengthAdjust: "spacingAndGlyphs" as const };
  const hd = { fontFamily: "Liberation Sans, sans-serif", fontWeight: 700, fontSize: 39, lengthAdjust: "spacingAndGlyphs" as const };
  return (
    <svg width="748" height="804" viewBox="482 154 748 804">
      <defs>
        <clipPath id="cTop"><circle cx="870.500" cy="438.500" r="188" /></clipPath>
        <clipPath id="cLeft"><circle cx="748.500" cy="657.500" r="187.500" /></clipPath>
      </defs>
      <g fill="#49494e">
        <circle cx="870.500" cy="438.500" r="197" /><circle cx="750" cy="657.500" r="197" /><circle cx="991" cy="657.500" r="197" />
      </g>
      <g fill="#c5f295">
        <circle cx="870.500" cy="438.500" r="188" /><circle cx="749.500" cy="657.500" r="188" /><circle cx="991.500" cy="657.500" r="188" />
      </g>
      <g fill="#c4e79a">
        <circle cx="870.500" cy="438.500" r="185.500" /><circle cx="749.500" cy="657.500" r="185.500" /><circle cx="991.500" cy="657.500" r="185.500" />
      </g>
      <g fill="#94d767">
        <circle cx="748.500" cy="657.500" r="187.500" clipPath="url(#cTop)" />
        <circle cx="992.500" cy="657.500" r="187.500" clipPath="url(#cTop)" />
        <circle cx="992.500" cy="657.500" r="187.500" clipPath="url(#cLeft)" />
      </g>
      <g clipPath="url(#cTop)"><circle cx="992.500" cy="657.500" r="187.500" clipPath="url(#cLeft)" fill="#6ccb48" /></g>
      <g fill="#000">
        <text {...hd} x="791" y="207" textLength="145">SOCIAL</text>
        <text {...hd} x="535" y="927" textLength="334">ENVIRONMENTAL</text>
        <text {...hd} x="955" y="927" textLength="211">ECONOMIC</text>
      </g>
      <g fill="#6c6a7d" fontSize="32.500" stroke="#6c6a7d" strokeWidth=".5">
        <text {...tx} x="737" y="395" textLength="250">COMFORTABLE LIFE</text>
        <text {...tx} x="638" y="681" textLength="106">ENERGY</text>
        <text {...tx} x="590" y="717" textLength="200">PERFORMANCE</text>
        <text {...tx} x="998" y="681" textLength="106">QUALITY</text>
        <text {...tx} x="950" y="717" textLength="201">CONSTRUCTION</text>
      </g>
      <g fill="#10180a" fontSize="32.500" fontWeight="500">
        <text {...tx} x="722" y="525" textLength="106">QUALITY</text>
        <text {...tx} x="914" y="522" textLength="83">SPEED</text>
        <text {...tx} x="833" y="660" textLength="71">COST</text>
      </g>
    </svg>
  );
}

function DocTabs() {
  return (
    <div className="flex h-[42px] bg-[#202020]">
      <div className="flex w-[546px] items-center bg-[#3c3c3c] pl-[12px]">
        <span className="w-[506px] font-['Open_Sans'] text-[14.500px] leading-5 font-bold tracking-[-0.2px] whitespace-nowrap text-white">
          Revised page 7 Strong built structures devopment business plan041714*
        </span>
        <svg width="17" height="17" viewBox="0 0 17 17" fill="none" className="ml-[4px]" stroke="#b5b5b5">
          <circle cx="8.500" cy="8.500" r="7.800" strokeWidth="1.200" /><path d="m5.500 5.500 6 6M11.500 5.500l-6 6" strokeWidth="2" />
        </svg>
      </div>
      <div className="ml-auto flex items-center">
        <svg width="22" height="16" viewBox="0 0 22 16" className="mr-[11px]"><defs><linearGradient id="tri"><stop stopColor="#eee" /><stop offset="1" stopColor="#666" /></linearGradient></defs><path d="M0 0h22L11 16z" fill="url(#tri)" /></svg>
        <svg width="21" height="19" viewBox="0 0 21 19" className="mr-[8px]" stroke="#0b84dd" strokeWidth="4.800"><path d="M3 0 18 19M18 0 3 19" /></svg>
      </div>
      <Slot c="h-[36px] w-[30px] self-start bg-[#646464] pl-[4px]">
        <svg width="22" height="13" viewBox="0 0 22 13"><path d="M0 2c0-1 1-2 2-2h12l8 6.500-8 6.500H2c-1 0-2-1-2-2z" fill="#d3171d" /></svg>
      </Slot>
    </div>
  );
}

function BottomBar() {
  return (
    <div className="flex h-[38px] items-center bg-[#202020]">
      <Slot c="w-[34px]"><Ico><path d="M1 1h26v26H1z" fill="#aaa" stroke="#444" strokeWidth="2" /><path d="M2 2h7v24H2z" fill="#5a5a5a" /><path d="m13 9 10 11M23 9 13 20" stroke="#666" strokeWidth="3.400" /></Ico></Slot>
      <Slot c="w-[34px]"><Ico><path d="M1 1h26v26H1z" fill="#fff" stroke="#000" /><path d="M2 2h7v24H2z" fill="#0b84dd" /><path d="M7 14h11" stroke="#0b84dd" strokeWidth="3.400" /><path d="m16 8 9 6-9 6z" fill="#0b84dd" /></Ico></Slot>
      <Slot c="w-[34px]"><Ico><path d="M1 1h26v26H1z" fill="#fff" stroke="#000" /><path d="M2 2h24v7H2z" fill="#0b84dd" /><path d="M14 7v12" stroke="#0b84dd" strokeWidth="3.400" /><path d="m8 16 6 9 6-9z" fill="#0b84dd" /><path d="M2 10h10M16 10h10" stroke="#000" strokeWidth="1.500" /></Ico></Slot>
      <Slot c="ml-[23px] w-[34px]"><Ico w={22} vb="0 0 22 28"><path d="M1 1h20v26H1z" fill="#fff" stroke="#0b84dd" strokeWidth="1.600" /><path d="M11 5v18M4 14h14" stroke="#0b84dd" strokeWidth="2" /><path d="m8 7 3-5 3 5zM8 21l3 5 3-5zM5 10.500 1 14l4 3.500zM17 10.500l4 3.500-4 3.500z" fill="#0b84dd" /></Ico></Slot>
      <Slot c="w-[34px]"><Ico w={22} vb="0 0 22 28"><path d="M1 1h20v11H1z" fill="#fff" stroke="#0b84dd" strokeWidth="1.600" /><path d="M1 15.500h20V27H1z" fill="#fff" stroke="#0b84dd" strokeWidth="1.600" /><path d="M4 21.500h14" stroke="#0b84dd" strokeWidth="2" /><path d="M6 18 1.500 21.500 6 25zM16 18l4.500 3.500L16 25z" fill="#0b84dd" /></Ico></Slot>
      <Slot c="ml-[177px] w-[34px]"><Hand /></Slot>
      <Slot c="w-[34px]"><ArrowCursor /></Slot>
      <Slot c="h-[34px] w-[34px] border border-[#0b84dd] bg-[#333]"><Magnifier /></Slot>
      <Slot c="w-[34px]">
        <Ico><path d="M1 3c3 0 4 1 4.500 2C6 4 7 3 10 3M1 25c3 0 4-1 4.500-2 .5 1 1.500 2 4.500 2M5.500 4v20" stroke="#0f75c4" strokeWidth="2" /><path d="M12.500 23 19.500 5l7.500 18M15 17h9.500" stroke="#0f75c4" strokeWidth="2.800" /></Ico>
      </Slot>
      <div className="ml-[2px] flex h-[20px] w-[112px] items-center bg-white pl-[4px] font-['Liberation_Sans'] text-[12px] tracking-[-0.35px] text-black">
        <span className="flex-1">192.01%</span>
        <Slot c="m-px h-[18px] w-[15px] bg-[#b0b4b8]"><Caret c="text-black" /></Slot>
      </div>
      <svg width="20" height="22" viewBox="0 0 20 22" className="ml-[31px]" fill="#5f5f5f"><path d="M0 0h3v22H0zM20 0v22L4 11z" /></svg>
      <svg width="16" height="20" viewBox="0 0 16 20" className="ml-[17px]" fill="#5f5f5f"><path d="M16 0v20L0 10z" /></svg>
      <div className="ml-[10px] flex h-[19px] w-[247px] items-center justify-center bg-white pt-px font-['Noto_Sans'] text-[11.500px] tracking-[-0.4px] text-black">1 of 1</div>
      <svg width="16" height="20" viewBox="0 0 16 20" className="ml-[10px]" fill="#5f5f5f"><path d="M0 0v20l16-10z" /></svg>
      <svg width="20" height="22" viewBox="0 0 20 22" className="ml-[17px]" fill="#5f5f5f"><path d="M17 0h3v22h-3zM0 0v22l16-11z" /></svg>
      <Sep c="ml-[9px]" />
      <svg width="25" height="25" viewBox="0 0 25 25" className="ml-[7px]"><circle cx="12.500" cy="12.500" r="12.300" fill="#0b84dd" /><path d="M16.500 5.500v14L6.500 12.500z" fill="#1c2834" /></svg>
      <svg width="25" height="25" viewBox="0 0 25 25" className="ml-[9px]"><circle cx="12.500" cy="12.500" r="12.300" fill="#686868" /><path d="M8.500 5.500v14l10-7z" fill="#2a2a2a" /></svg>
      <Slot c="ml-[34px] h-[34px] w-[34px] border border-[#0b84dd] bg-[#333]">
        <Ico><defs><linearGradient id="up" x1="0" y1="0" x2="0" y2="1"><stop stopColor="#ffb429" /><stop offset="1" stopColor="#f26a1b" /></linearGradient></defs><path d="m14 0 11 18h-7v10h-7V18H3z" fill="url(#up)" /></Ico>
      </Slot>
      <Slot c="w-[36px]">
        <Ico s={30} vb="0 0 28 30"><path d="M3 30c0-9 2-14 11-14s11 5 11 14z" fill="#1e88dc" /><path d="m8 16 6 13 6-13z" fill="#fff" /><path d="m14 20-2 3 2 6 2-6z" fill="#1e88dc" /><ellipse cx="14" cy="8" rx="8" ry="8.500" fill="#e3b391" /><ellipse cx="12" cy="5" rx="4" ry="3.500" fill="#f7dcc6" /></Ico>
      </Slot>
      <Slot c="w-[12px]"><Caret /></Slot>
      <Slot c="w-[36px] pl-1">
        <Ico s={30} vb="0 0 28 30"><path d="M14 1c6 0 8.500 4 8.500 8.500S18 16 17.500 23h-7C10 16 5.500 14 5.500 9.500S8 1 14 1z" fill="#f8ee1c" /><ellipse cx="12" cy="7" rx="3" ry="4" fill="#fffcc0" /><path d="M11 24h6v4l-3 2-3-2z" fill="#777" /></Ico>
      </Slot>
      <Slot c="w-[16px] pl-1"><Caret /></Slot>
      <Slot c="w-[36px]">
        <Ico s={30} w={28} vb="0 0 28 30"><path d="M15 15V8c0-8 10-8 10.500 0v3" stroke="#e2a52a" strokeWidth="3" /><path d="m1 14 17 0 3 3v11H4l-3-2z" fill="#f7c52e" /><path d="M18 14h3v14l-3 1z" fill="#c98a18" /></Ico>
      </Slot>
      <Slot c="w-[12px] pl-[2px]"><Caret /></Slot>
    </div>
  );
}

function VScroll({ thumb, c }: { thumb: string; c: string }) {
  return (
    <div className={`flex w-[21px] shrink-0 flex-col items-center border-l border-white bg-[#f0f0f0] ${c}`}>
      <Slot c="h-[21px]"><Chevron d="u" /></Slot>
      <div className={`w-[19px] bg-[#cdcdcd] ${thumb}`} />
      <Slot c="mt-auto h-[20px] pb-[2px]"><Chevron d="d" /></Slot>
    </div>
  );
}

function Center() {
  return (
    <div className="relative flex flex-1 flex-col bg-[#646464]">
      <div className="mx-[10px] flex flex-1 flex-col">
        <div className="-mr-[10px]"><div className="pr-[10px]"><DocTabs /></div></div>
        <div className="flex h-[812px]">
          <div className="flex flex-1 bg-[#3c3c3c] pl-[287px]">
            <div className="h-[805px] w-[750px] border-x border-b border-[#0b84dd] bg-white"><Venn /></div>
          </div>
          <VScroll c="h-[812px]" thumb="mt-[17px] h-[753px]" />
        </div>
        <div className="flex h-[21px] bg-[#202020]">
          <div className="flex w-[1303px] items-center justify-between border-t border-white bg-[#f0f0f0] px-[5px]">
            <Chevron d="l" c="#b5b5b5" /><Chevron d="r" c="#b5b5b5" />
          </div>
          <svg width="17" height="20" viewBox="0 0 17 20" className="ml-[3px]"><path d="M1 1h9l4 4v13H1z" fill="#fff" stroke="#111" /><path d="M9 1v5h5" fill="none" stroke="#111" /><path d="M12 10v8M8 14h8" stroke="#8cc63f" strokeWidth="2.600" /></svg>
        </div>
        <BottomBar />
        <div className="flex h-[10px] items-center justify-between px-[6px]">
          <svg width="4" height="7" viewBox="0 0 4 7"><path d="M4 0v7L0 3.500z" fill="#fff" /></svg>
          <svg width="4" height="7" viewBox="0 0 4 7"><path d="M0 0v7l4-3.500z" fill="#fff" /></svg>
        </div>
      </div>
      <div className="absolute top-[436px] left-0 flex h-[40px] w-[20px] items-center justify-center rounded-r-full bg-[#0b84dd] pr-[2px]">
        <svg width="6" height="10" viewBox="0 0 6 10"><path d="M6 0v10L0 5z" fill="#fff" /></svg>
      </div>
      <div className="absolute top-[436px] right-0 flex h-[40px] w-[20px] items-center justify-center rounded-l-full bg-[#0b84dd] pl-[2px]">
        <svg width="6" height="10" viewBox="0 0 6 10"><path d="M0 0v10l6-5z" fill="#fff" /></svg>
      </div>
      <div className="absolute bottom-0 left-[652px] flex h-[20px] w-[40px] items-center justify-center rounded-t-full bg-[#0b84dd]">
        <svg width="10" height="7" viewBox="0 0 10 7"><path d="m0 7 5-7 5 7-5-2z" fill="#fff" /></svg>
      </div>
    </div>
  );
}

const Header = ({ t, c = "" }: { t: string; c?: string }) => (
  <div className={`flex h-[25px] items-center bg-[#202020] pl-[19px] text-white ${c}`}>
    <svg width="7" height="4" viewBox="0 0 7 4" className="mt-[2px]"><path d="M0 0h7L3.500 4z" fill="#fff" /></svg>
    <span className="ml-[19px]">{t}</span>
  </div>
);
const Select = ({ t, c }: { t: string; c: string }) => (
  <div className={`flex h-[22px] items-center justify-between border border-[#7a7a7a] bg-white pt-px pr-[5px] pl-[5px] ${c}`}>
    {t}<svg width="10" height="6" viewBox="0 0 10 6" fill="none"><path d="m.5.500 4.500 4.500L9.500.500" stroke="#444" strokeWidth="1.200" /></svg>
  </div>
);
const Box = ({ t, c }: { t?: string; c: string }) => <div className={`flex h-[22px] items-center border border-[#7a7a7a] bg-white pt-px pl-[3px] ${c}`}>{t}</div>;
const Check = ({ t, c = "" }: { t: string; c?: string }) => (
  <div className={`flex h-[16px] items-center gap-[6px] ${c}`}>
    <div className="size-[16px] border border-[#333] bg-white" />
    <span className="pt-[2px] tracking-[.2px]">{t}</span>
  </div>
);

function RightPanel() {
  return (
    <div className="flex w-[351px] shrink-0 flex-col overflow-hidden bg-[#202020] font-['Liberation_Sans'] text-[13px] text-black">
      <div className="flex h-[42px] shrink-0 bg-black">
        <div className="w-[7px] border-b-2 border-[#0b84dd]" />
        <Slot c="w-[42px] border-x-2 border-t-2 border-[#0b84dd] bg-[#202020]"><Ruler /></Slot>
        <Slot c="w-[42px] border-b-2 border-[#0b84dd]"><Gear /></Slot>
        <Slot c="w-[42px] border-b-2 border-[#0b84dd]"><Binoculars /></Slot>
        <div className="flex-1 border-b-2 border-[#0b84dd]" />
      </div>
      <div className="flex h-[37px] shrink-0 items-center pb-px">
        <Slot c="w-[34px]"><MLen /></Slot>
        <Slot c="w-[34px]"><MPoly t="ft²" /></Slot>
        <Slot c="w-[34px]"><MPoly /></Slot>
        <Slot c="w-[34px]"><MCircle /></Slot>
        <Slot c="w-[34px]"><MAngle /></Slot>
        <Slot c="w-[34px]"><MTri /></Slot>
        <Slot c="w-[17px] pl-px"><Caret /></Slot>
        <Slot c="w-[34px]"><MCube /></Slot>
        <Slot c="w-[34px]"><MCount /></Slot>
        <Sep c="ml-[3px]" />
        <Slot c="ml-[2px] w-[34px]"><MView /></Slot>
      </div>
      <div className="flex h-[844px]">
        <div className="flex w-[330px] shrink-0 flex-col bg-[#f0f0f0]">
          <Header t="Scale" c="tracking-[.25px]" />
          <div className="h-[355px] pt-[9px] pl-[11px] text-[13px] leading-4">
            <Check t="Store Scale in Page" />
            <Check c="mt-[10px]" t="Separate Vertical Scale" />
            <Check c="mt-[9px]" t="Independent Units" />
            <div className="mt-[20px] flex items-center"><Box c="w-[76px]" t="1" /><Select c="ml-[4px] w-[61px]" t="in" /><span className="ml-[15px]">=</span></div>
            <div className="mt-[18px] flex items-center"><Box c="w-[76px] tracking-[-0.2px]" t={`10'-0"`} /><Select c="ml-[4px] w-[61px] tracking-[-0.3px]" t={`ft' in"`} /></div>
            <div className="mt-[61px] h-[16px] pt-px pl-[3px] tracking-[.2px]">Precision</div>
            <Select c="w-[145px]" t="1" />
            <div className="mt-[10px] ml-px flex h-[32px] w-[145px] items-center justify-center border border-[#adadad] bg-[#e1e1e1] pt-px pr-px tracking-[.2px]">Calibrate</div>
            <div className="mt-[9px] ml-px flex h-[32px] w-[145px] items-center justify-center border border-[#adadad] bg-[#e1e1e1] pt-px pr-px tracking-[.1px]">Recalculate</div>
          </div>
          <Header t="Measurements" c="border-t-2 border-[#646464] pb-[3px] tracking-[.25px]" />
          <div className="flex h-[332px] flex-col pt-[8px]">
            <div className="flex h-[31px] items-start"><div className="w-[95px] pt-[4px] text-right">Subject:</div><Box c="ml-[12px] w-[212px]" /></div>
            <div className="flex h-[31px] items-start"><div className="w-[95px] pt-[4px] text-right tracking-[.2px]">Label:</div><Box c="ml-[12px] w-[212px]" /></div>
            <div className="flex h-[31px] items-start">
              <div className="w-[95px] pt-[4px] text-right tracking-[.2px]">Depth:</div>
              <div className="ml-[12px] flex h-[22px] w-[39px] items-center border border-[#cccccc] bg-[#f0f0f0] pl-[3px] text-[#7d7d7d] outline-1 -outline-offset-2 outline-white">8</div>
              <div className="ml-[9px] h-[22px] flex-1 border-y border-l border-[#cccccc] bg-white p-px">
                <div className="flex h-[18px] w-[165px] items-center bg-[#f0f0f0] pl-[4px] text-[#7d7d7d]">in</div>
              </div>
            </div>
            <div className="flex h-[31px] items-start"><div className="w-[95px] pt-[5px] text-right">Scale:</div><div className="pt-[11px] pl-[15px] tracking-[-0.4px]">1 in = 10 ft' in"</div></div>
            <div className="grid grid-cols-[98px_113px_104px] pt-px text-right leading-[18px]">
              <span /><span>Current</span><span className="tracking-[.3px]">Total</span>
              {["Length", "Area", "Perimeter", "Diameter", "Angle", "Radius", "Volume", "Count"].map((l) => (
                <React.Fragment key={l}><span className="tracking-[.1px]">{l}:</span><span>0</span><span>0</span></React.Fragment>
              ))}
            </div>
            <div className="mt-[2px] w-[316px] text-right text-[#0000ee] underline tracking-[.2px]">Clear</div>
          </div>
          <Header t="Viewports" c="border-t-2 border-[#646464] pb-[3px] tracking-[.25px]" />
          <div className="flex flex-1 pt-[16px] pl-[10px]">
            <div className="flex flex-col gap-[11px] pt-px">
              <Slot c="size-[24px] border border-[#bfbfbf] bg-[#cccccc]"><svg width="11" height="9" viewBox="0 0 11 9"><path d="m5.500 0 5.500 9H0z" fill="#848484" /></svg></Slot>
              <Slot c="size-[24px] border border-[#bfbfbf] bg-[#cccccc]"><svg width="11" height="9" viewBox="0 0 11 9"><path d="M5.500 9 0 0h11z" fill="#848484" /></svg></Slot>
            </div>
            <div className="ml-[10px] w-[275px] border border-b-0 border-[#828790] bg-white" />
          </div>
        </div>
        <VScroll c="h-[844px]" thumb="h-[449px]" />
      </div>
    </div>
  );
}

function RightTools() {
  const s = "h-[37px]";
  return (
    <div className="flex w-[35px] shrink-0 flex-col items-center overflow-hidden bg-[#202020] pr-[2px]">
      <Slot c="h-[3px]"><GripH /></Slot>
      <Slot c={`${s} w-full`}><Ico><path d="M4 25 14 4l10 21M8 18.500h12" stroke="#0b84dd" strokeWidth="3.400" /></Ico></Slot>
      <Slot c={s}><Typewriter /></Slot>
      <Slot c={s}><Note /></Slot>
      <Slot c={s}><TagLink /></Slot>
      <Slot c={s}><Pen c="#0f5fa8" tip="#cfd8e0" hi="#8fc0ea" /></Slot>
      <Slot c={s}><Pen c="#fdf000" tip="#e08a2a" hi="#fff770" /></Slot>
      <Slot c={s}><Eraser /></Slot>
      <Slot c="mt-[3px] h-[10px]"><GripH /></Slot>
      <Slot c={s}><Ruler /></Slot>
      <Slot c={s}><Compass /></Slot>
      <div className="mt-[3px] h-px w-[29px] shrink-0 bg-[#cfcfcf]" />
      <Slot c="mt-[2px] h-[37px]"><MLen /></Slot>
      <Slot c={s}><MPoly t="ft²" /></Slot>
      <Slot c={s}><MPoly /></Slot>
      <Slot c={s}><MCircle /></Slot>
      <Slot c={s}><MAngle /></Slot>
      <Slot c={s}><MTri /></Slot>
      <Slot c={s}><MCube /></Slot>
      <Slot c={s}><MCount /></Slot>
      <div className="mt-[3px] h-px w-[29px] shrink-0 bg-[#cfcfcf]" />
      <Slot c="mt-[2px] h-[37px]"><MView /></Slot>
    </div>
  );
}

function StatusBar() {
  return (
    <div className="flex h-[26px] items-center bg-[#202020] pt-[2px] font-['Noto_Sans'] text-[14.500px] tracking-[-0.45px] whitespace-nowrap text-white">
      <span className="w-[1189px] shrink-0 pl-[5px] text-[15px] tracking-[-0.260px]">Select region to zoom. Click to zoom in or CTRL+click to zoom out</span>
      <span className="w-[70px] pl-[5px] font-bold tracking-[-0.3px]">Snap To:</span>
      <span className="ml-[5px] w-[41px]">Grid</span>
      <span className="w-[65px]">Content</span>
      <span className="w-[57px]">Markup</span>
      <div className="h-[16px] w-px bg-[#cfcfcf]" />
      <span className="w-[79px] pl-[5px] tracking-[-0.3px]">Show Grid</span>
      <div className="h-[16px] w-px bg-[#cfcfcf]" />
      <span className="w-[51px] pl-[6px]">Reuse</span>
      <div className="h-[16px] w-px bg-[#cfcfcf]" />
      <span className="w-[50px] pl-[6px]">Sync</span>
      <Caret />
      <span className="ml-[37px] w-[147px] tracking-[-0.25px]">3.25 x 3.56 in</span>
      <span className="tracking-[-0.25px]">(3.86, 3.05)</span>
    </div>
  );
}

function DesktopBelow() {
  return (
    <div className="flex h-[19px] flex-col bg-white">
      <div className="flex h-[8px] items-start overflow-hidden">
        <div className="flex h-[8px] w-[211px] items-start overflow-hidden pl-[18px] font-['Noto_Sans'] text-[14px] leading-[8px] whitespace-nowrap text-[#1e3a5f]">
          <span className="w-[82px] shrink-0">28 items</span><span>1 item selected (</span>
        </div>
        <div className="flex h-[8px] w-[306px] border-x-2 border-[#0b84dd] bg-[#202020] pl-[5px]">
          <svg width="22" height="8" viewBox="0 0 22 8"><path d="M0 0h8l5 8z" fill="#c9bd2a" /><path d="M9 0h12l-4 7-4 1z" fill="#5b5c5e" stroke="#d9c89c" /></svg>
        </div>
        <div className="ml-[2px] h-[8px] w-px bg-[#333]" />
        <div className="ml-[136px] h-[5px] w-[76px] border-r-2 border-b-2 border-[#8a8a8a] bg-white shadow-sm" />
        <svg width="56" height="8" viewBox="0 0 56 8" className="mr-[5px] ml-auto">
          <path d="M1 1h5v6H1zM10 2h8M10 6h8" fill="none" stroke="#999" /><path d="M3 3h2v2H3z" fill="#b33" />
          <path d="M29 0h18v8H29z" fill="#9cc4dc" /><path d="M29 2c6 4 10 0 18 3v3H29z" fill="#2f6a4f" />
        </svg>
      </div>
      <div className="h-px bg-[#1f86d6]" />
      <div className="h-[8px] bg-white" />
      <div className="flex h-[2px] bg-[#202020]"><div className="ml-[60px] w-[430px] bg-[#3c3c3c]" /><div className="ml-[436px] w-[61px] bg-[#5a5a5a]" /></div>
    </div>
  );
}

export default function App() {
  return (
    <div className="flex h-[1080px] w-[1920px] flex-col overflow-hidden bg-white">
      <div className="flex h-[1061px]">
        <div className="flex w-[1914px] flex-col bg-[#202020]">
          <MenuBar />
          <ToolbarTop />
          <ToolbarSecond />
          <div className="mt-[8px] flex h-[923px]">
            <LeftPanel />
            <Center />
            <RightPanel />
            <RightTools />
          </div>
          <StatusBar />
        </div>
        <div className="flex w-[6px] flex-col bg-[#f0f0f0]">
          <div className="h-[29px] bg-[#202020]" />
          <div className="flex h-[29px] items-center border-b border-[#ccc] bg-white"><div className="h-[10px] w-[2px] rounded-r bg-[#1a6fb8]" /></div>
          <div className="h-[113px] border-b border-[#ccc] bg-[#fafafa]" />
          <div className="h-[44px] bg-white" />
          <div className="mt-[21px] h-[755px] w-[5px] bg-[#cdcdcd]" />
          <div className="mt-auto h-[11px] bg-white" />
        </div>
      </div>
      <DesktopBelow />
    </div>
  );
}
